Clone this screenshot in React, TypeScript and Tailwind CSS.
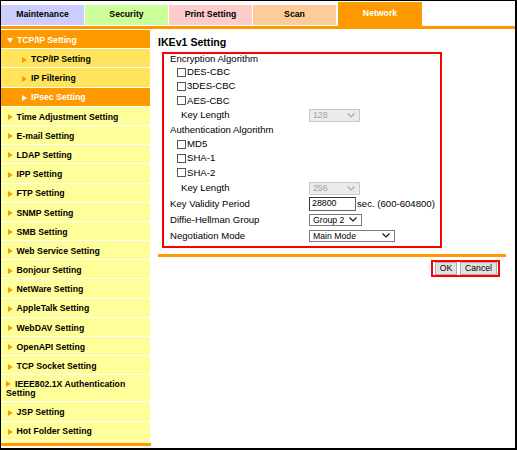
import React from 'react';

const font = { fontFamily: '"Liberation Sans", Arial, sans-serif' };

const tabs = [
  { label: 'Maintenance', bg: 'bg-[#ccccff]' },
  { label: 'Security', bg: 'bg-[#ccff99]' },
  { label: 'Print Setting', bg: 'bg-[#ffcccc]' },
  { label: 'Scan', bg: 'bg-[#ffcc99]' },
];

const menuItems = [
  'Time Adjustment Setting',
  'E-mail Setting',
  'LDAP Setting',
  'IPP Setting',
  'FTP Setting',
  'SNMP Setting',
  'SMB Setting',
  'Web Service Setting',
  'Bonjour Setting',
  'NetWare Setting',
  'AppleTalk Setting',
  'WebDAV Setting',
  'OpenAPI Setting',
  'TCP Socket Setting',
  'IEEE802.1X Authentication Setting',
  'JSP Setting',
  'Hot Folder Setting',
];

const Arrow = ({ color }: { color: string }) => (
  <svg width="5" height="6" viewBox="0 0 5 6" className="inline-block mr-[4px] align-[0px]">
    <path d="M0 0L5 3L0 6Z" fill={color} />
  </svg>
);

const Chevron = ({ color }: { color: string }) => (
  <svg width="8" height="5" viewBox="0 0 8 5" className="shrink-0">
    <path d="M0.5 0.5L4 4L7.5 0.5" fill="none" stroke={color} strokeWidth="1.1" />
  </svg>
);

const Check = ({ label }: { label: string }) => (
  <div className="h-[14.4px] flex items-center pl-[13px]">
    <span className="inline-block w-[9px] h-[9px] border border-[#555] bg-white mr-[1px]" />
    <span>{label}</span>
  </div>
);

const FakeSelect = ({ value, width, disabled }: { value: string; width: string; disabled?: boolean }) => (
  <div
    className={`${width} flex items-center justify-between pl-[3px] pr-[4px] border text-[8.7px] ${
      disabled ? 'h-[13px] bg-[#ebebeb] border-[#c8c8c8] text-[#a0a0a0]' : 'h-[12px] bg-white border-[#7a7a7a] text-black'
    }`}
  >
    <span className="leading-none">{value}</span>
    <Chevron color={disabled ? '#a8a8a8' : '#111'} />
  </div>
);

const SideRow = ({ children, className }: { children: React.ReactNode; className: string }) => (
  <div className={`h-[19.2px] pt-[2.5px] border-b border-white flex items-center ${className}`}>{children}</div>
);

export default function App() {
  return (
    <div
      className="w-[517px] h-[450px] bg-white border-l border-t border-r-2 border-b-2 border-black flex flex-col overflow-hidden text-black"
      style={font}
    >
      {/* Tabs */}
      <div className="h-[25px] flex items-end">
        {tabs.map((t) => (
          <div
            key={t.label}
            className={`w-[83px] h-[20px] mb-[1px] mr-[1px] ${t.bg} flex items-center justify-center font-bold text-[8.7px]`}
          >
            {t.label}
          </div>
        ))}
        <div className="w-[84px] h-[24px] ml-[1px] bg-[#ff9900] text-white flex items-center justify-center font-bold text-[8.7px]">
          Network
        </div>
      </div>
      <div className="h-[3px] bg-[#ff9900]" />

      <div className="flex flex-1 mt-[1px]">
        {/* Sidebar */}
        <div className="w-[149px] flex flex-col font-bold text-[8.7px]">
          <SideRow className="bg-[#ff9900] text-white pl-[6px]">
            <svg width="6" height="5" viewBox="0 0 6 5" className="mr-[4px]">
              <path d="M0 0L6 0L3 5Z" fill="#fff" />
            </svg>
            TCP/IP Setting
          </SideRow>
          <SideRow className="bg-[#ffe45c] pl-[21px]">
            <Arrow color="#ff9900" />
            TCP/IP Setting
          </SideRow>
          <SideRow className="bg-[#ffe45c] pl-[21px]">
            <Arrow color="#ff9900" />
            IP Filtering
          </SideRow>
          <SideRow className="bg-[#ff9900] text-white pl-[21px]">
            <Arrow color="#fff" />
            IPsec Setting
          </SideRow>
          {menuItems.map((m) =>
            m.startsWith('IEEE') ? (
              <div key={m} className="h-[27px] pt-[2px] border-b border-white bg-[#ffff99] flex items-center pl-[5px]">
                <div className="leading-[9.4px]">
                  <Arrow color="#ff9900" />
                  {m}
                </div>
              </div>
            ) : (
              <SideRow key={m} className="bg-[#ffff99] pl-[6.5px]">
                <Arrow color="#ff9900" />
                {m}
              </SideRow>
            )
          )}
          <div className="h-[2px] bg-[#ffff99]" />
          <div className="h-[3px] w-[150px] bg-[#ff9900]" />
        </div>

        {/* Main content */}
        <div className="ml-[8px] w-[348px] flex flex-col -mt-[1px]">
          <div className="h-[23px] pt-[4px] flex items-center font-bold text-[10.6px]">IKEv1 Setting</div>

          <div className="ml-[4px] w-[280px] border-2 border-[#ff0000] text-[9.6px] pb-[2px]">
            <div className="h-[11px] flex items-center pl-[6px]">Encryption Algorithm</div>
            <Check label="DES-CBC" />
            <Check label="3DES-CBC" />
            <Check label="AES-CBC" />
            <div className="h-[14.4px] flex items-center">
              <div className="w-[145px] pl-[17px]">Key Length</div>
              <FakeSelect value="128" width="w-[51px]" disabled />
            </div>
            <div className="h-[14.4px] flex items-center pl-[6px]">Authentication Algorithm</div>
            <Check label="MD5" />
            <Check label="SHA-1" />
            <Check label="SHA-2" />
            <div className="h-[15.8px] flex items-center">
              <div className="w-[145px] pl-[17px]">Key Length</div>
              <FakeSelect value="256" width="w-[51px]" disabled />
            </div>
            <div className="h-[16px] flex items-center">
              <div className="w-[145px] pl-[6px]">Key Validity Period</div>
              <div className="w-[47px] h-[14px] border border-[#666] border-t-[#333] border-l-[#333] bg-white pl-[2px] flex items-center text-[8.8px]">
                28800
              </div>
              <span className="ml-[1px]">sec. (600-604800)</span>
            </div>
            <div className="h-[16px] flex items-center">
              <div className="w-[145px] pl-[6px]">Diffie-Hellman Group</div>
              <FakeSelect value="Group 2" width="w-[53px]" />
            </div>
            <div className="h-[16px] flex items-center">
              <div className="w-[145px] pl-[6px]">Negotiation Mode</div>
              <FakeSelect value="Main Mode" width="w-[86px]" />
            </div>
          </div>

          <div className="mt-[6px] h-[3px] bg-[#ff9900]" />

          <div className="self-end mr-[6px] mt-[3px] border-2 border-[#ff0000] flex pl-[2px] pr-[1px] gap-[3px] text-[8.7px]">
            <button className="w-[22px] h-[13px] bg-[#e1e1e1] border border-[#adadad] flex items-center justify-center leading-none">
              OK
            </button>
            <button className="w-[37px] h-[13px] bg-[#e1e1e1] border border-[#adadad] flex items-center justify-center leading-none">
              Cancel
            </button>
          </div>
        </div>
      </div>
    </div>
  );
}
